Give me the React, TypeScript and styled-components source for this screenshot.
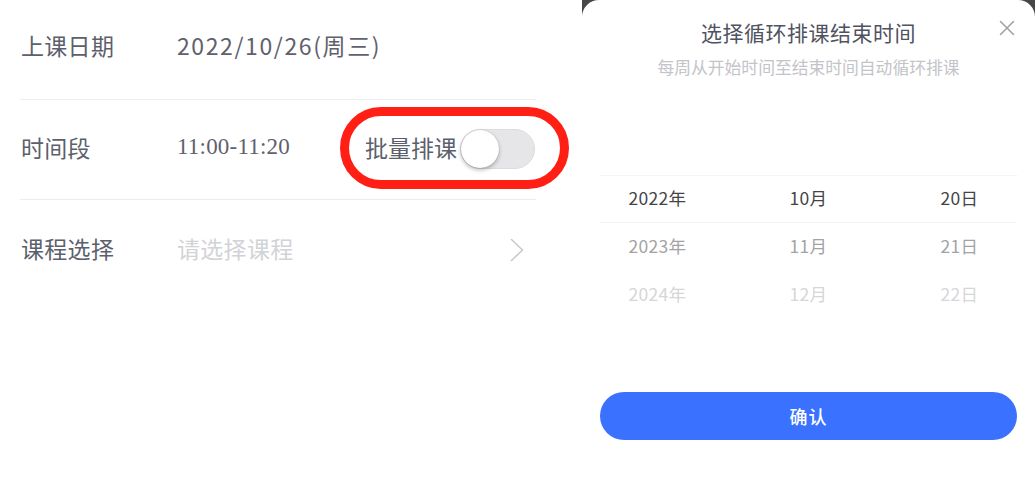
import React from 'react'
import styled, { createGlobalStyle } from 'styled-components'

const GlobalStyle = createGlobalStyle`
  html, body {
    margin: 0;
    padding: 0;
    background: #ffffff;
  }
  body {
    font-family: "Noto Sans CJK SC", "Noto Sans", sans-serif;
  }
`

const Screen = styled.div`
  display: flex;
  width: 1035px;
  height: 489px;
  overflow: hidden;
  background: #ffffff;
`

// left side: the lesson form
const FormPane = styled.div`
  position: relative;
  flex: 0 0 582px;
  box-sizing: border-box;
  padding: 0 46px 0 20px;
`

const FormRow = styled.div<{ last?: boolean; lift?: number }>`
  display: flex;
  align-items: center;
  height: 100px;
  box-sizing: border-box;
  padding-bottom: ${p => p.lift ?? 5}px;
  border-bottom: ${p => (p.last ? 'none' : '1px solid #ededef')};
  padding-left: 1px;
`

const Label = styled.div`
  flex: 0 0 156px;
  font-size: 23px;
  color: #5c5f6c;
  letter-spacing: 0.3px;
`

const Value = styled.div<{ muted?: boolean }>`
  flex: 1;
  font-size: 23px;
  color: ${p => (p.muted ? '#d2d3d7' : '#5f616d')};
  letter-spacing: ${p => (p.muted ? '0.3px' : '1.6px')};
`

const TimeValue = styled.div`
  flex: 0 0 188px;
  font-family: "Liberation Serif", "Times New Roman", serif;
  font-size: 23px;
  letter-spacing: 0.2px;
  color: #5f616d;
`

const BatchGroup = styled.div`
  display: flex;
  align-items: center;
  gap: 3px;
`

const BatchText = styled.span`
  font-size: 23px;
  color: #5c5f6c;
`

const SwitchTrack = styled.div`
  position: relative;
  width: 75px;
  height: 40px;
  box-sizing: border-box;
  border-radius: 20px;
  background: #e6e6e8;
  border: 1px solid #dcdcdf;
  margin-top: 4px;
`

const SwitchKnob = styled.div`
  position: absolute;
  left: 0;
  top: 0;
  width: 38px;
  height: 38px;
  border-radius: 50%;
  background: #ffffff;
  box-shadow: 0 2px 4px rgba(0, 0, 0, 0.28), 0 0 1px rgba(0, 0, 0, 0.2);
`

const Chevron = styled.svg`
  margin-right: 12px;
  margin-top: 4px;
`

// red annotation drawn over the form
const Highlight = styled.div`
  position: absolute;
  left: 340px;
  top: 107px;
  width: 229px;
  height: 82px;
  box-sizing: border-box;
  border: 9px solid #ff1f14;
  border-radius: 41px;
  pointer-events: none;
`

// right side: bottom sheet with picker
const SheetBackdrop = styled.div`
  flex: 1;
  background: #474747;
  display: flex;
`

const Sheet = styled.div`
  flex: 1;
  display: flex;
  flex-direction: column;
  background: #ffffff;
  border-radius: 17px 17px 0 0;
  position: relative;
`

const SheetTitle = styled.div`
  margin-top: 18px;
  text-align: center;
  font-size: 21px;
  line-height: 28px;
  color: #50535f;
  letter-spacing: 0.5px;
`

const SheetSubtitle = styled.div`
  margin-top: 9px;
  text-align: center;
  font-size: 16.8px;
  line-height: 24px;
  color: #c3c4c9;
`

const CloseButton = styled.button`
  position: absolute;
  top: 18px;
  right: 18px;
  width: 20px;
  height: 20px;
  padding: 0;
  border: none;
  background: none;
  display: flex;
  align-items: center;
  justify-content: center;
`

const Picker = styled.div`
  position: relative;
  display: grid;
  grid-template-columns: repeat(3, 1fr);
  height: 240px;
`

const SelectionBand = styled.div`
  position: absolute;
  left: 18px;
  right: 18px;
  top: 96px;
  height: 48px;
  box-sizing: border-box;
  border-top: 1px solid #f4f4f6;
  border-bottom: 1px solid #f4f4f6;
  pointer-events: none;
`

const PickerColumn = styled.div`
  display: flex;
  flex-direction: column;
  padding-top: 96px;
`

const PickerItem = styled.div<{ level: number }>`
  height: 48px;
  box-sizing: border-box;
  padding-bottom: 4px;
  display: flex;
  align-items: center;
  justify-content: center;
  font-size: 17.5px;
  letter-spacing: 0.3px;
  color: ${p => ['#444446', '#a3a3a5', '#d6d6d8'][p.level]};
`

const ConfirmButton = styled.button`
  margin: 73px 18px 0 18px;
  height: 48px;
  border: none;
  border-radius: 24px;
  background: #3a71ff;
  color: #ffffff;
  font-family: "Noto Sans CJK SC", sans-serif;
  font-size: 18px;
  font-weight: 500;
  letter-spacing: 1px;
`

const columns = [
  ['2022年', '2023年', '2024年'],
  ['10月', '11月', '12月'],
  ['20日', '21日', '22日'],
]

export default function App() {
  return (
    <Screen>
      <GlobalStyle />

      <FormPane>
        <FormRow lift={9}>
          <Label>上课日期</Label>
          <Value>2022/10/26(周三)</Value>
        </FormRow>

        <FormRow>
          <Label>时间段</Label>
          <TimeValue>11:00-11:20</TimeValue>
          <BatchGroup>
            <BatchText>批量排课</BatchText>
            <SwitchTrack>
              <SwitchKnob />
            </SwitchTrack>
          </BatchGroup>
        </FormRow>

        <FormRow last>
          <Label>课程选择</Label>
          <Value muted>请选择课程</Value>
          <Chevron width="14" height="24" viewBox="0 0 14 24">
            <path d="M1.5 1.5 L12.5 12 L1.5 22.5" fill="none" stroke="#c9c9cc" strokeWidth="1.6" strokeLinecap="round" strokeLinejoin="round" />
          </Chevron>
        </FormRow>

        <Highlight />
      </FormPane>

      <SheetBackdrop>
        <Sheet>
          <SheetTitle>选择循环排课结束时间</SheetTitle>
          <SheetSubtitle>每周从开始时间至结束时间自动循环排课</SheetSubtitle>
          <CloseButton aria-label="close">
            <svg width="16" height="16" viewBox="0 0 16 16">
              <path d="M1.5 1.5 L14.5 14.5 M14.5 1.5 L1.5 14.5" stroke="#a3a3a6" strokeWidth="1.6" strokeLinecap="round" />
            </svg>
          </CloseButton>

          <Picker>
            <SelectionBand />
            {columns.map((col, i) => (
              <PickerColumn key={i}>
                {col.map((item, level) => (
                  <PickerItem key={item} level={level}>{item}</PickerItem>
                ))}
              </PickerColumn>
            ))}
          </Picker>

          <ConfirmButton>确认</ConfirmButton>
        </Sheet>
      </SheetBackdrop>
    </Screen>
  )
}
